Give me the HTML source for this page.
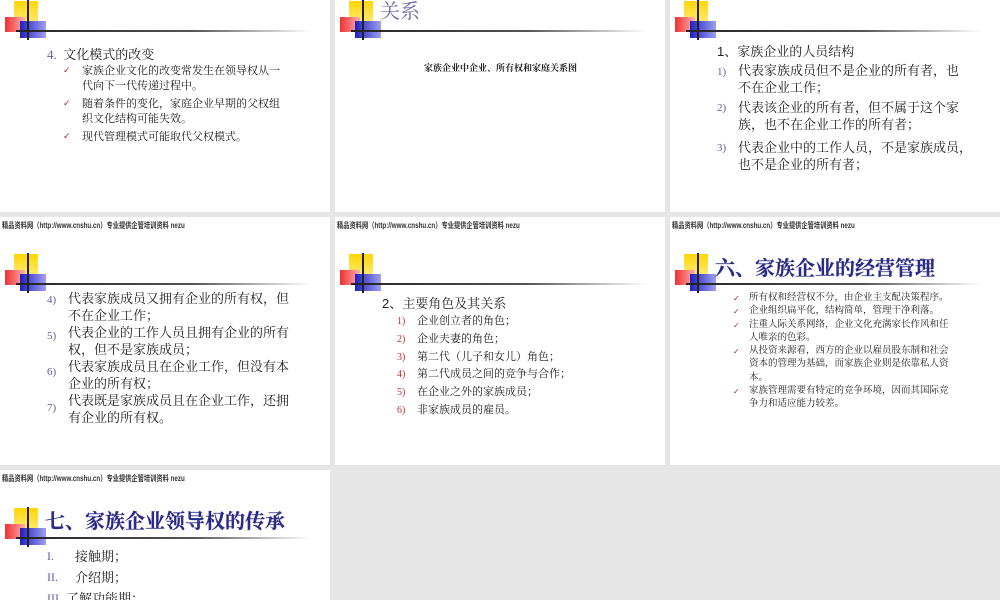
<!DOCTYPE html>
<html><head><meta charset="utf-8"><style>
*{margin:0;padding:0}
body{width:1000px;height:600px;background:#e6e6e6;position:relative;overflow:hidden;font-family:"Liberation Serif","Noto Serif CJK SC",serif;color:#222}
.p{position:absolute;background:#fff;overflow:hidden}
.a{position:absolute;white-space:nowrap}
.ft{position:absolute;left:2px;top:3px;font-family:"Liberation Sans","Noto Sans CJK SC",sans-serif;font-size:8px;font-weight:bold;color:#333;white-space:nowrap;transform:scaleX(.78);transform-origin:left}
.lg{position:absolute;width:310px;height:40px}
.lg .y{position:absolute;left:14px;top:1px;width:24px;height:22px;background:linear-gradient(#ffd700,#ffe97a)}
.lg .r{position:absolute;left:5px;top:17px;width:20px;height:15px;background:linear-gradient(90deg,#f03030,#ffb0b0)}
.lg .b{position:absolute;left:20px;top:21px;width:26px;height:17px;background:linear-gradient(90deg,#2020c0,#a0a0f0)}
.lg .v{position:absolute;left:27px;top:0;width:1.5px;height:40px;background:#222}
.lg .h{position:absolute;left:16px;top:30px;width:295px;height:1.5px;background:linear-gradient(90deg,#222,#555 60%,#fff)}
.ck{color:#b02030;font-size:9px;font-family:"DejaVu Sans",sans-serif}
.n{color:#6060a0}
.rn{color:#c03030}
.t{color:#2a2a88;font-size:20px;font-weight:bold;-webkit-text-stroke:0.2px #2a2a88}
</style></head><body>

<!-- Row 1 -->
<div class="p" style="left:0;top:0;width:330px;height:212px">
 <div class="lg" style="left:0;top:0"><div class="y"></div><div class="r"></div><div class="b"></div><div class="v"></div><div class="h"></div></div>
 <div class="a" style="left:47px;top:44px;font-size:13px"><span class="n">4.</span>&nbsp; 文化模式的改变</div>
 <div class="a ck" style="left:63px;top:64px;line-height:15px">✓</div>
 <div class="a" style="left:82px;top:64px;font-size:11px;line-height:15px">家族企业文化的改变常发生在领导权从一<br>代向下一代传递过程中。</div>
 <div class="a ck" style="left:63px;top:97px;line-height:15px">✓</div>
 <div class="a" style="left:82px;top:97px;font-size:11px;line-height:15px">随着条件的变化，家庭企业早期的父权组<br>织文化结构可能失效。</div>
 <div class="a ck" style="left:63px;top:130px;line-height:15px">✓</div>
 <div class="a" style="left:82px;top:130px;font-size:11px;line-height:15px">现代管理模式可能取代父权模式。</div>
</div>
<div class="p" style="left:335px;top:0;width:330px;height:212px">
 <div class="lg" style="left:0;top:0"><div class="y"></div><div class="r"></div><div class="b"></div><div class="v"></div><div class="h"></div></div>
 <div class="a" style="left:45px;top:-24px;font-size:20px;line-height:24px;color:#6868a8">三、家族企业中的所有权关系和<br>关系</div>
 <div class="a" style="left:89px;top:61px;font-size:9px;font-weight:bold">家族企业中企业、所有权和家庭关系图</div>
</div>
<div class="p" style="left:670px;top:0;width:330px;height:212px">
 <div class="lg" style="left:0;top:0"><div class="y"></div><div class="r"></div><div class="b"></div><div class="v"></div><div class="h"></div></div>
 <div class="a" style="left:47px;top:41px;font-size:13px"><span style="font-family:'Liberation Sans',sans-serif">1</span>、家族企业的人员结构</div>
 <div class="a" style="left:47px;top:62px;font-size:13px;line-height:17px"><span class="n" style="font-size:11px">1)</span></div>
 <div class="a" style="left:68px;top:62px;font-size:13px;line-height:17px">代表家族成员但不是企业的所有者，也<br>不在企业工作；</div>
 <div class="a" style="left:47px;top:99px;font-size:13px"><span class="n" style="font-size:11px">2)</span></div>
 <div class="a" style="left:68px;top:99px;font-size:13px;line-height:17px">代表该企业的所有者，但不属于这个家<br>族，也不在企业工作的所有者；</div>
 <div class="a" style="left:47px;top:139px;font-size:13px"><span class="n" style="font-size:11px">3)</span></div>
 <div class="a" style="left:68px;top:139px;font-size:13px;line-height:17px">代表企业中的工作人员，不是家族成员，<br>也不是企业的所有者；</div>
</div>

<!-- Row 2 -->
<div class="p" style="left:0;top:217px;width:330px;height:248px">
 <div class="ft">精品资料网（http://www.cnshu.cn）专业提供企管培训资料 nezu</div>
 <div class="lg" style="left:0;top:36px"><div class="y"></div><div class="r"></div><div class="b"></div><div class="v"></div><div class="h"></div></div>
 <div class="a" style="left:47px;top:73px;font-size:13px;line-height:17px"><span class="n" style="font-size:11px">4)</span><br><br><span class="n" style="font-size:11px">5)</span><br><br><span class="n" style="font-size:11px">6)</span><br><br><span class="n" style="font-size:11px">7)</span></div>
 <div class="a" style="left:68px;top:73px;font-size:13px;line-height:17px">代表家族成员又拥有企业的所有权，但<br>不在企业工作；<br>代表企业的工作人员且拥有企业的所有<br>权，但不是家族成员；<br>代表家族成员且在企业工作，但没有本<br>企业的所有权；<br>代表既是家族成员且在企业工作，还拥<br>有企业的所有权。</div>
</div>
<div class="p" style="left:335px;top:217px;width:330px;height:248px">
 <div class="ft">精品资料网（http://www.cnshu.cn）专业提供企管培训资料 nezu</div>
 <div class="lg" style="left:0;top:36px"><div class="y"></div><div class="r"></div><div class="b"></div><div class="v"></div><div class="h"></div></div>
 <div class="a" style="left:47px;top:76px;font-size:13px"><span style="font-family:'Liberation Sans',sans-serif">2</span>、主要角色及其关系</div>
 <div class="a rn" style="left:62px;top:96px;font-size:10px;line-height:17.8px">1)<br>2)<br>3)<br>4)<br>5)<br>6)</div>
 <div class="a" style="left:82px;top:96px;font-size:11px;line-height:17.8px">企业创立者的角色；<br>企业夫妻的角色；<br>第二代（儿子和女儿）角色；<br>第二代成员之间的竞争与合作；<br>在企业之外的家族成员；<br>非家族成员的雇员。</div>
</div>
<div class="p" style="left:670px;top:217px;width:330px;height:248px">
 <div class="ft">精品资料网（http://www.cnshu.cn）专业提供企管培训资料 nezu</div>
 <div class="lg" style="left:0;top:36px"><div class="y"></div><div class="r"></div><div class="b"></div><div class="v"></div><div class="h"></div></div>
 <div class="a t" style="left:45px;top:38px;line-height:28px">六、家族企业的经营管理</div>
 <div class="a ck" style="left:63px;top:75px;font-size:8px;line-height:13.3px">✓<br>✓<br>✓<br><br>✓<br><br><br>✓</div>
 <div class="a" style="left:79px;top:75px;font-size:9.5px;line-height:13.3px">所有权和经营权不分，由企业主支配决策程序。<br>企业组织扁平化，结构简单，管理干净利落。<br>注重人际关系网络，企业文化充满家长作风和任<br>人唯亲的色彩。<br>从投资来源看，西方的企业以雇员股东制和社会<br>资本的管理为基础，而家族企业则是依靠私人资<br>本。<br>家族管理需要有特定的竞争环境，因而其国际竞<br>争力和适应能力较差。</div>
</div>

<!-- Row 3 -->
<div class="p" style="left:0;top:470px;width:330px;height:130px">
 <div class="ft">精品资料网（http://www.cnshu.cn）专业提供企管培训资料 nezu</div>
 <div class="lg" style="left:0;top:37px"><div class="y"></div><div class="r"></div><div class="b"></div><div class="v"></div><div class="h"></div></div>
 <div class="a t" style="left:45px;top:38px;line-height:28px">七、家族企业领导权的传承</div>
 <div class="a n" style="left:47px;top:76px;font-size:12px;line-height:21px">I.<br>II.<br>III.</div>
 <div class="a" style="left:75px;top:76px;font-size:13px;line-height:21px">接触期；<br>介绍期；<br></div>
 <div class="a" style="left:66px;top:118px;font-size:13px">了解功能期；</div>
</div>
</body></html>
